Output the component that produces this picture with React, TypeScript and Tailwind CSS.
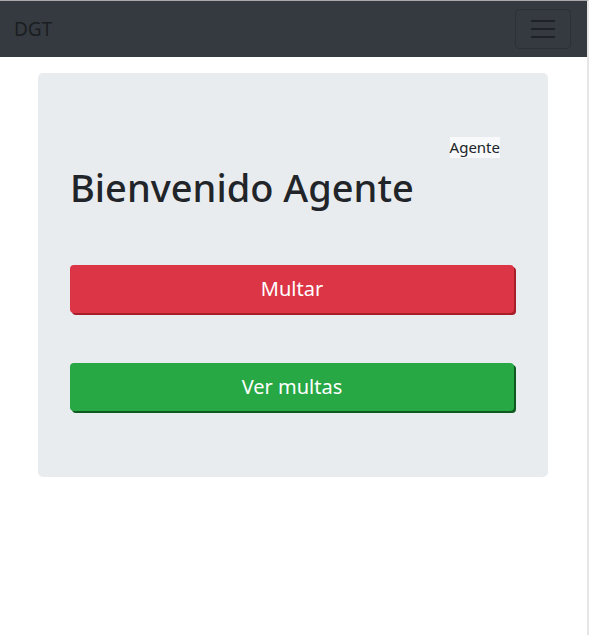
export default function App() {
  return (
    <div className="min-h-[635px] bg-white border-t border-[#a9a9a9] border-r-2 border-r-[#e6e6e6]" style={{ fontFamily: '"Noto Sans", "Open Sans", sans-serif' }}>
      {/* Navbar */}
      <nav className="h-[56px] bg-[#343a40] flex items-center justify-between pl-[14px] pr-[16px]">
        <span className="text-[19px] text-[#1b1e21] leading-none">DGT</span>
        <button className="w-[56px] h-[40px] border border-[#2c3136] rounded-[4px] flex flex-col items-center justify-center gap-[6px]">
          <span className="block w-[24px] h-[2px] bg-[#1e2125]" />
          <span className="block w-[24px] h-[2px] bg-[#1e2125]" />
          <span className="block w-[24px] h-[2px] bg-[#1e2125]" />
        </button>
      </nav>

      {/* Jumbotron */}
      <div className="pl-[38px] pr-[39px] pt-[16px]">
        <div className="bg-[#e9ecef] rounded-[5px] pt-[64px] pb-[64px] px-[32px]">
          <div className="flex justify-end pr-[16px]">
            <span className="bg-[#f8f9fa] text-[15px] leading-[21px] text-[#212529]">Agente</span>
          </div>
          <h1 className="text-[38px] leading-[48px] font-medium text-[#212529] mt-[5px] mb-[54px]">Bienvenido Agente</h1>
          <button className="w-[444px] h-[48px] bg-[#dc3545] rounded-[4px] text-white text-[20px] shadow-[2px_2px_0_#a71d2a] block">
            Multar
          </button>
          <button className="w-[444px] h-[48px] bg-[#28a745] rounded-[4px] text-white text-[20px] shadow-[2px_2px_0_#0e5a1e] block mt-[50px] mb-[2px]">
            Ver multas
          </button>
        </div>
      </div>
    </div>
  )
}
